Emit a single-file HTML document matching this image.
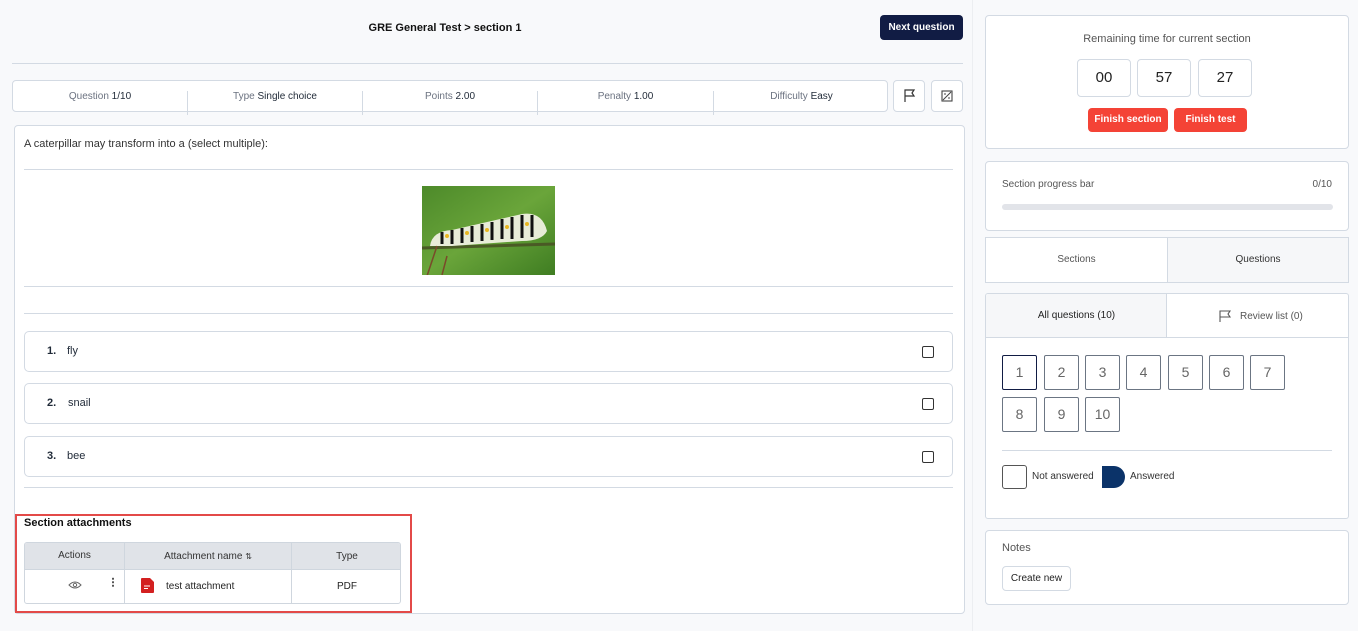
<!DOCTYPE html>
<html><head><meta charset="utf-8"><style>
*{box-sizing:border-box;margin:0;padding:0}
body{width:1358px;height:631px;background:#f8f9fb;font-family:"Liberation Sans",sans-serif;color:#1f2937;position:relative;overflow:hidden;font-size:10px}
.abs{position:absolute}
.card{position:absolute;background:#fff;border:1px solid #d3dae3;border-radius:4px}
.hr{position:absolute;height:1px;background:#d3dae3}
.opt{position:absolute;left:24px;width:929px;height:41px;border:1px solid #d3dae3;border-radius:5px;background:#fff;font-size:11px}
.opt b{position:absolute;left:22px;top:13px}
.opt span{position:absolute;left:42px;top:13px}
.opt i{position:absolute;right:18px;top:14px;width:12px;height:12px;border:1.5px solid #333;border-radius:2px}
.info div{position:absolute;top:10px;text-align:center;color:#6b7280;font-size:10px}
.info b{font-weight:normal;color:#1f2937}
.sep{position:absolute;top:4px;width:1px;height:24px;background:#d3dae3}
.num{position:absolute;width:35px;height:35px;border:1px solid #6b7583;border-radius:2px;text-align:center;line-height:33px;font-size:14px;color:#666}
.red{position:absolute;background:#f44336;color:#fff;font-weight:bold;font-size:10px;border-radius:4px;text-align:center;line-height:24px;height:24px;top:92px}
.tbox{position:absolute;top:43px;width:54px;height:38px;border:1px solid #d3dae3;border-radius:4px;text-align:center;line-height:36px;font-size:15px;color:#222}
</style></head><body>
<div class="abs" style="left:0;top:22px;width:890px;text-align:center;font-weight:bold;font-size:11px;color:#111">GRE General Test &gt; section 1</div>
<div class="abs" style="left:880px;top:15px;width:83px;height:25px;background:#111c44;border-radius:4px;color:#fff;font-weight:bold;font-size:10px;text-align:center;line-height:25px">Next question</div>
<div class="hr" style="left:12px;top:63px;width:951px"></div>
<div class="card info" style="left:12px;top:80px;width:876px;height:32px">
<div style="left:0;width:174px">Question <b>1/10</b></div><div class="sep" style="left:174px"></div>
<div style="left:175px;width:174px">Type <b>Single choice</b></div><div class="sep" style="left:349px"></div>
<div style="left:350px;width:174px">Points <b>2.00</b></div><div class="sep" style="left:524px"></div>
<div style="left:525px;width:175px">Penalty <b>1.00</b></div><div class="sep" style="left:700px"></div>
<div style="left:701px;width:175px">Difficulty <b>Easy</b></div>
</div>
<div class="card" style="left:893px;top:80px;width:32px;height:32px"><svg width="30" height="30" viewBox="0 0 30 30"><path d="M11 21V9h9l-2 3 2 3h-9" fill="none" stroke="#333" stroke-width="1.2"/></svg></div>
<div class="card" style="left:931px;top:80px;width:32px;height:32px"><svg width="30" height="30" viewBox="0 0 30 30"><rect x="10" y="10" width="10" height="10" fill="none" stroke="#444" stroke-width="1.1"/><path d="M11 19l8-8M12 13h2M16 17h2" stroke="#444" stroke-width="1"/></svg></div>
<div class="card" style="left:14px;top:125px;width:951px;height:489px"></div>
<div class="abs" style="left:24px;top:138px;font-size:11px;color:#333">A caterpillar may transform into a (select multiple):</div>
<div class="hr" style="left:24px;top:169px;width:929px"></div>
<svg class="abs" style="left:422px;top:186px" width="133" height="89" viewBox="0 0 133 89">
<defs><linearGradient id="g" x1="0" y1="0" x2="1" y2="1"><stop offset="0" stop-color="#4d8a2a"/><stop offset=".5" stop-color="#6aa53a"/><stop offset="1" stop-color="#3f7d22"/></linearGradient></defs>
<rect width="133" height="89" fill="url(#g)"/>
<path d="M0 62 L133 58" stroke="#4a5a25" stroke-width="3"/>
<path d="M8 60 Q10 45 30 44 L100 28 Q120 25 125 45 Q120 55 100 55 L30 60 Z" fill="#e8ecd8"/>
<g stroke="#111" stroke-width="3">
<path d="M20 46v12M30 44v14M40 42v15M50 40v16M60 38v17M70 36v18M80 33v20M90 31v22M100 29v23M110 29v22"/></g>
<g fill="#e8b622"><circle cx="25" cy="50" r="2"/><circle cx="45" cy="47" r="2"/><circle cx="65" cy="44" r="2"/><circle cx="85" cy="41" r="2"/><circle cx="105" cy="38" r="2"/></g>
<path d="M5 90 L15 60 M20 89 L25 70" stroke="#7a4a2a" stroke-width="1.5"/>
</svg>
<div class="hr" style="left:24px;top:286px;width:929px"></div>
<div class="hr" style="left:24px;top:313px;width:929px"></div>
<div class="opt" style="top:331px"><b>1.</b><span>fly</span><i></i></div>
<div class="opt" style="top:383px"><b>2.</b><span style="left:43px">snail</span><i></i></div>
<div class="opt" style="top:436px"><b>3.</b><span>bee</span><i></i></div>
<div class="hr" style="left:24px;top:487px;width:929px"></div>
<div class="abs" style="left:15px;top:514px;width:397px;height:99px;border:2px solid #e34a48"></div>
<div class="abs" style="left:24px;top:517px;font-weight:bold;font-size:11px;color:#111">Section attachments</div>
<div class="abs" style="left:24px;top:542px;width:377px;height:62px;border:1px solid #cfd6de;border-radius:3px;background:#fff;overflow:hidden">
<div class="abs" style="left:0;top:0;width:377px;height:27px;background:#e0e3e8;border-bottom:1px solid #cfd6de"></div>
<div class="abs" style="left:99px;top:0;width:1px;height:62px;background:#cfd6de"></div>
<div class="abs" style="left:266px;top:0;width:1px;height:62px;background:#cfd6de"></div>
<div class="abs" style="left:0;top:7px;width:99px;text-align:center;color:#333">Actions</div>
<div class="abs" style="left:100px;top:8px;width:166px;text-align:center;color:#333">Attachment name <span style="font-size:8px">⇅</span></div>
<div class="abs" style="left:267px;top:8px;width:110px;text-align:center;color:#333">Type</div>
<svg class="abs" style="left:43px;top:37px" width="14" height="10" viewBox="0 0 14 10"><path d="M1 5Q7-1 13 5Q7 11 1 5Z" fill="none" stroke="#666" stroke-width="1"/><circle cx="7" cy="5" r="1.7" fill="none" stroke="#666"/></svg>
<div class="abs" style="left:87px;top:34px;width:2px;height:10px;background:radial-gradient(circle,#555 50%,transparent 55%) 0 0/2px 3.5px"></div>
<svg class="abs" style="left:116px;top:35px" width="13" height="15" viewBox="0 0 13 15"><path d="M0 1Q0 0 1 0H9L13 4V14Q13 15 12 15H1Q0 15 0 14Z" fill="#d32020"/><path d="M3 8h6M3 10.5h4" stroke="#fff"/></svg>
<div class="abs" style="left:141px;top:38px;color:#222">test attachment</div>
<div class="abs" style="left:267px;top:38px;width:110px;text-align:center;color:#222">PDF</div>
</div>
<div class="abs" style="left:972px;top:0;width:1px;height:631px;background:#eceef1"></div>
<div class="card" style="left:985px;top:15px;width:364px;height:134px">
<div class="abs" style="left:0;top:17px;width:362px;text-align:center;color:#555;font-size:11px">Remaining time for current section</div>
<div class="tbox" style="left:91px">00</div><div class="tbox" style="left:151px">57</div><div class="tbox" style="left:212px">27</div>
<div class="red" style="left:102px;width:80px">Finish section</div>
<div class="red" style="left:188px;width:73px">Finish test</div>
</div>
<div class="card" style="left:985px;top:161px;width:364px;height:70px">
<div class="abs" style="left:16px;top:17px;color:#555">Section progress bar</div>
<div class="abs" style="right:16px;top:17px;color:#555">0/10</div>
<div class="abs" style="left:16px;top:42px;width:331px;height:6px;border-radius:3px;background:#e2e4e9"></div>
</div>
<div class="card" style="left:985px;top:237px;width:364px;height:46px;border-radius:0;overflow:hidden">
<div class="abs" style="left:0;top:16px;width:181px;text-align:center;color:#555">Sections</div>
<div class="abs" style="left:181px;top:0;width:183px;height:46px;background:#f6f7f9;border-left:1px solid #d3dae3"></div>
<div class="abs" style="left:181px;top:16px;width:182px;text-align:center;color:#333">Questions</div>
</div>
<div class="card" style="left:985px;top:293px;width:364px;height:226px;border-radius:3px;overflow:hidden">
<div class="abs" style="left:0;top:0;width:181px;height:44px;background:#f6f7f9;border-right:1px solid #d3dae3;border-bottom:1px solid #d3dae3"></div>
<div class="abs" style="left:181px;top:43px;width:183px;height:1px;background:#d3dae3"></div>
<div class="abs" style="left:0;top:16px;width:181px;text-align:center;color:#222">All questions (10)</div>
<svg class="abs" style="left:232px;top:15px" width="14" height="14" viewBox="0 0 14 14"><path d="M2 13V2h10l-2 3 2 3H2" fill="none" stroke="#555" stroke-width="1.1"/></svg>
<div class="abs" style="left:254px;top:17px;color:#555">Review list (0)</div>
</div>
<div class="num" style="left:1002px;top:355px;border-color:#111c44">1</div>
<div class="num" style="left:1044px;top:355px">2</div>
<div class="num" style="left:1085px;top:355px">3</div>
<div class="num" style="left:1126px;top:355px">4</div>
<div class="num" style="left:1168px;top:355px">5</div>
<div class="num" style="left:1209px;top:355px">6</div>
<div class="num" style="left:1250px;top:355px">7</div>
<div class="num" style="left:1002px;top:397px">8</div>
<div class="num" style="left:1044px;top:397px">9</div>
<div class="num" style="left:1085px;top:397px">10</div>
<div class="hr" style="left:1002px;top:450px;width:330px"></div>
<div class="abs" style="left:1002px;top:465px;width:25px;height:24px;border:1px solid #555;border-radius:3px"></div>
<div class="abs" style="left:1032px;top:471px;color:#333">Not answered</div>
<div class="abs" style="left:1102px;top:466px;width:23px;height:22px;background:#0b3369;border-radius:0 11px 11px 0"></div>
<div class="abs" style="left:1130px;top:471px;color:#333">Answered</div>
<div class="card" style="left:985px;top:530px;width:364px;height:75px">
<div class="abs" style="left:16px;top:11px;color:#555;font-size:11px">Notes</div>
<div class="abs" style="left:16px;top:35px;width:69px;height:25px;border:1px solid #d3dae3;border-radius:4px;text-align:center;line-height:23px;color:#222">Create new</div>
</div>
</body></html>
